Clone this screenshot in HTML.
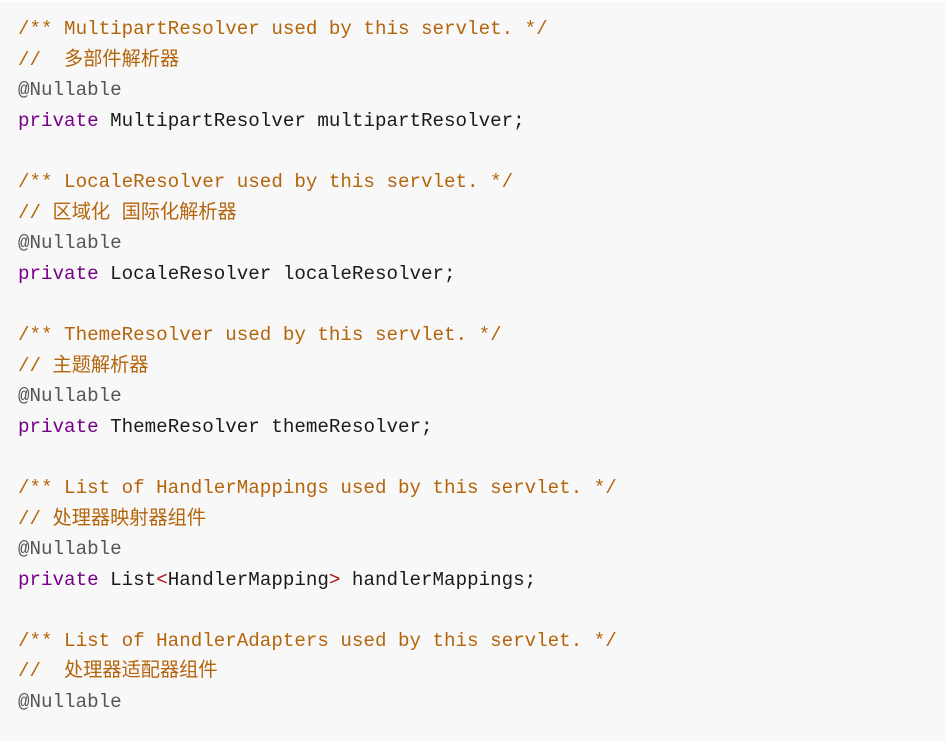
<!DOCTYPE html>
<html><head><meta charset="utf-8"><style>
html,body{margin:0;padding:0;background:#fff;}
.box{position:absolute;left:0;top:2px;width:945px;height:739px;background:#f8f8f8;}
pre{margin:0;position:absolute;left:18px;top:12px;font-family:"Liberation Mono","Noto Sans CJK SC",monospace;font-size:19.2px;line-height:30.6px;color:#1a1a1a;}
.c{color:#b4640b}.k{color:#770088}.a{color:#555}.t{color:#a11}
</style></head><body><div class="box"><pre><span class="c">/** MultipartResolver used by this servlet. */</span>
<span class="c">//  多部件解析器</span>
<span class="a">@Nullable</span>
<span class="k">private</span> MultipartResolver multipartResolver;

<span class="c">/** LocaleResolver used by this servlet. */</span>
<span class="c">// 区域化 国际化解析器</span>
<span class="a">@Nullable</span>
<span class="k">private</span> LocaleResolver localeResolver;

<span class="c">/** ThemeResolver used by this servlet. */</span>
<span class="c">// 主题解析器</span>
<span class="a">@Nullable</span>
<span class="k">private</span> ThemeResolver themeResolver;

<span class="c">/** List of HandlerMappings used by this servlet. */</span>
<span class="c">// 处理器映射器组件</span>
<span class="a">@Nullable</span>
<span class="k">private</span> List<span class="t">&lt;</span>HandlerMapping<span class="t">&gt;</span> handlerMappings;

<span class="c">/** List of HandlerAdapters used by this servlet. */</span>
<span class="c">//  处理器适配器组件</span>
<span class="a">@Nullable</span></pre></div></body></html>
